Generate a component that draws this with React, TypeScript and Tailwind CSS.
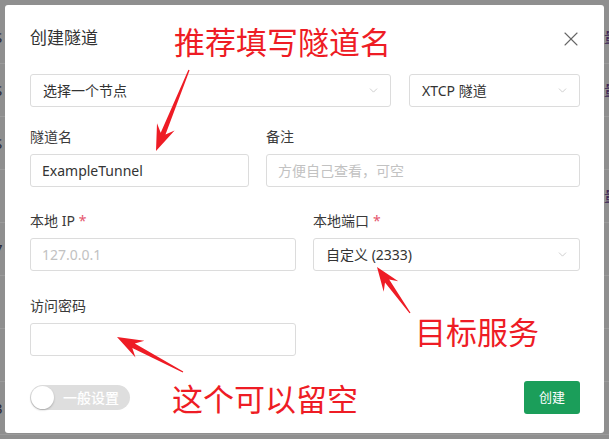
import { ChevronDown, X } from "lucide-react";

type Pt = [number, number];

const arrowPoints = (tail: Pt, tip: Pt, headLen: number, headW: number) => {
  const dx = tip[0] - tail[0];
  const dy = tip[1] - tail[1];
  const len = Math.hypot(dx, dy);
  const d: Pt = [dx / len, dy / len];
  const n: Pt = [-d[1], d[0]];
  const at = (base: Pt, back: number, side: number): Pt => [
    base[0] - d[0] * back + n[0] * side,
    base[1] - d[1] * back + n[1] * side,
  ];
  const pts: Pt[] = [
    at(tail, 0, 0.6),
    at(tip, headLen * 0.72, 2.6),
    at(tip, headLen, headW / 2),
    tip,
    at(tip, headLen, -headW / 2),
    at(tip, headLen * 0.72, -2.6),
    at(tail, 0, -0.6),
  ];
  return pts.map((p) => `${p[0].toFixed(1)},${p[1].toFixed(1)}`).join(" ");
};

const bgRows = [
  { l: "S", r: "量" },
  { l: "S", r: "量" },
  { l: "S", r: "" },
  { l: "[", r: "量" },
  { l: "7", r: "" },
  { l: "-", r: "" },
  { l: "-", r: "" },
  { l: "3", r: "" },
];

const Label = ({ text, required }: { text: string; required?: boolean }) => (
  <div className="h-5 leading-5 text-[14px] text-[#3a3a3a] mb-[7px]">
    {text}
    {required && <span className="text-[#e5566d] ml-1">*</span>}
  </div>
);

const Select = ({ value, className }: { value: string; className: string }) => (
  <div
    className={`h-[33px] border border-[#dcdcdc] rounded-[3px] flex items-center justify-between pl-3 pr-[10px] text-[14px] text-[#333] ${className}`}
  >
    <span>{value}</span>
    <ChevronDown className="w-[13px] h-[13px] text-[#c0c0c0]" strokeWidth={1.4} />
  </div>
);

const Input = ({
  value,
  placeholder,
  className,
}: {
  value?: string;
  placeholder?: string;
  className: string;
}) => (
  <div
    className={`h-[33px] border border-[#dcdcdc] rounded-[3px] flex items-center pl-[11px] text-[14px] ${className}`}
  >
    {value ? (
      <span className="text-[#333]">{value}</span>
    ) : (
      <span className="text-[#c2c2c2]">{placeholder}</span>
    )}
  </div>
);

const App = () => {
  return (
    <div
      className="relative w-[609px] h-[439px] overflow-hidden bg-[#8f8f8f]"
      style={{ fontFamily: '"Noto Sans", "Noto Sans CJK SC", sans-serif' }}
    >
      {/* background table behind the dialog */}
      <div className="flex flex-col pt-[11px]">
        {bgRows.map((row, i) => (
          <div
            key={i}
            className="h-[53px] border-b border-[#9b9b9b] flex items-center justify-between text-[15px] text-[#2a2a3a]"
          >
            <span className="-ml-[6px]">{row.l}</span>
            <span className="-mr-[10px] text-[#3b2456]">{row.r}</span>
          </div>
        ))}
      </div>

      {/* dialog */}
      <div className="absolute left-[5px] top-[5px] w-[599px] h-[428px] bg-white rounded-[3px] pl-[25px] pr-[24px] pt-[21px]">
        <div className="flex items-center justify-between h-6">
          <span className="text-[17px] text-[#333]">创建隧道</span>
          <X className="w-6 h-6 text-[#666] -mr-[3px] mt-[1px]" strokeWidth={1.1} />
        </div>

        <div className="flex gap-[18px] mt-6">
          <Select value="选择一个节点" className="w-[361px]" />
          <Select value="XTCP 隧道" className="flex-1" />
        </div>

        <div className="flex gap-[17px] mt-5">
          <div className="w-[219px]">
            <Label text="隧道名" />
            <Input value="ExampleTunnel" className="w-full" />
          </div>
          <div className="flex-1">
            <Label text="备注" />
            <Input placeholder="方便自己查看，可空" className="w-full" />
          </div>
        </div>

        <div className="flex gap-[17px] mt-6">
          <div className="w-[266px]">
            <Label text="本地 IP" required />
            <Input placeholder="127.0.0.1" className="w-full" />
          </div>
          <div className="flex-1">
            <Label text="本地端口" required />
            <Select value="自定义 (2333)" className="w-full" />
          </div>
        </div>

        <div className="mt-[25px] w-[266px]">
          <Label text="访问密码" />
          <Input className="w-full" />
        </div>

        <div className="flex items-center justify-between mt-[25px]">
          <div className="w-[100px] h-[25px] rounded-full bg-[#dedede] flex items-center pl-[1px] gap-[9px]">
            <div className="w-[23px] h-[23px] rounded-full bg-white shadow-[0_1px_2px_rgba(0,0,0,0.25)]" />
            <span className="text-[14px] text-white font-medium">一般设置</span>
          </div>
          <button className="w-[56px] h-[33px] rounded-[3px] bg-[#1b9e5a] text-white text-[13px]">
            创建
          </button>
        </div>
      </div>

      {/* red annotations */}
      <div className="absolute left-[174px] top-[27px] text-[31px] leading-none text-[#ee1c25]">
        推荐填写隧道名
      </div>
      <div className="absolute left-[415px] top-[317px] text-[31px] leading-none text-[#ee1c25]">
        目标服务
      </div>
      <div className="absolute left-[172px] top-[384px] text-[31px] leading-none text-[#ee1c25]">
        这个可以留空
      </div>
      <svg className="absolute inset-0 pointer-events-none" width={609} height={439}>
        <polygon points={arrowPoints([189, 70], [156, 151], 26, 19)} fill="#ee1c25" />
        <polygon points={arrowPoints([410, 313], [377, 267], 24, 18)} fill="#ee1c25" />
        <polygon points={arrowPoints([183, 372], [117, 337], 26, 19)} fill="#ee1c25" />
      </svg>
    </div>
  );
};

export default App;
